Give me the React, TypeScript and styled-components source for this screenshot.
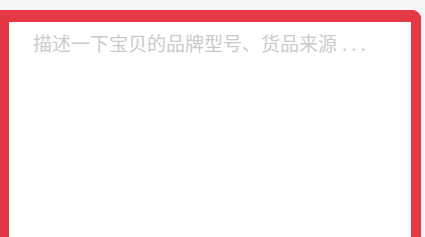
import styled, { createGlobalStyle } from 'styled-components';

const GlobalStyle = createGlobalStyle`
  html, body {
    margin: 0;
    padding: 0;
    background: #f5f5f5;
    overflow: hidden;
  }
`;

const Page = styled.div`
  display: flex;
  padding: 10px 4px 0 0;
  height: 237px;
  box-sizing: border-box;
  overflow: hidden;
`;

const DescBox = styled.div`
  flex: 1;
  min-height: 260px;
  background: #ffffff;
  border-style: solid;
  border-color: #e43845;
  border-width: 12px 10px 0 9px;
  border-top-right-radius: 9px;
  padding: 8px 20px 0 24px;
  box-sizing: border-box;
`;

const Placeholder = styled.div`
  font-family: 'Noto Sans CJK SC', 'Noto Sans', sans-serif;
  font-size: 19px;
  line-height: 26px;
  color: #cbcbcb;
  white-space: nowrap;
`;

const Dots = styled.span`
  margin-left: 5px;
  letter-spacing: 4px;
`;

export default function App() {
  return (
    <>
      <GlobalStyle />
      <Page>
        <DescBox>
          <Placeholder>
            描述一下宝贝的品牌型号、货品来源<Dots>...</Dots>
          </Placeholder>
        </DescBox>
      </Page>
    </>
  );
}
